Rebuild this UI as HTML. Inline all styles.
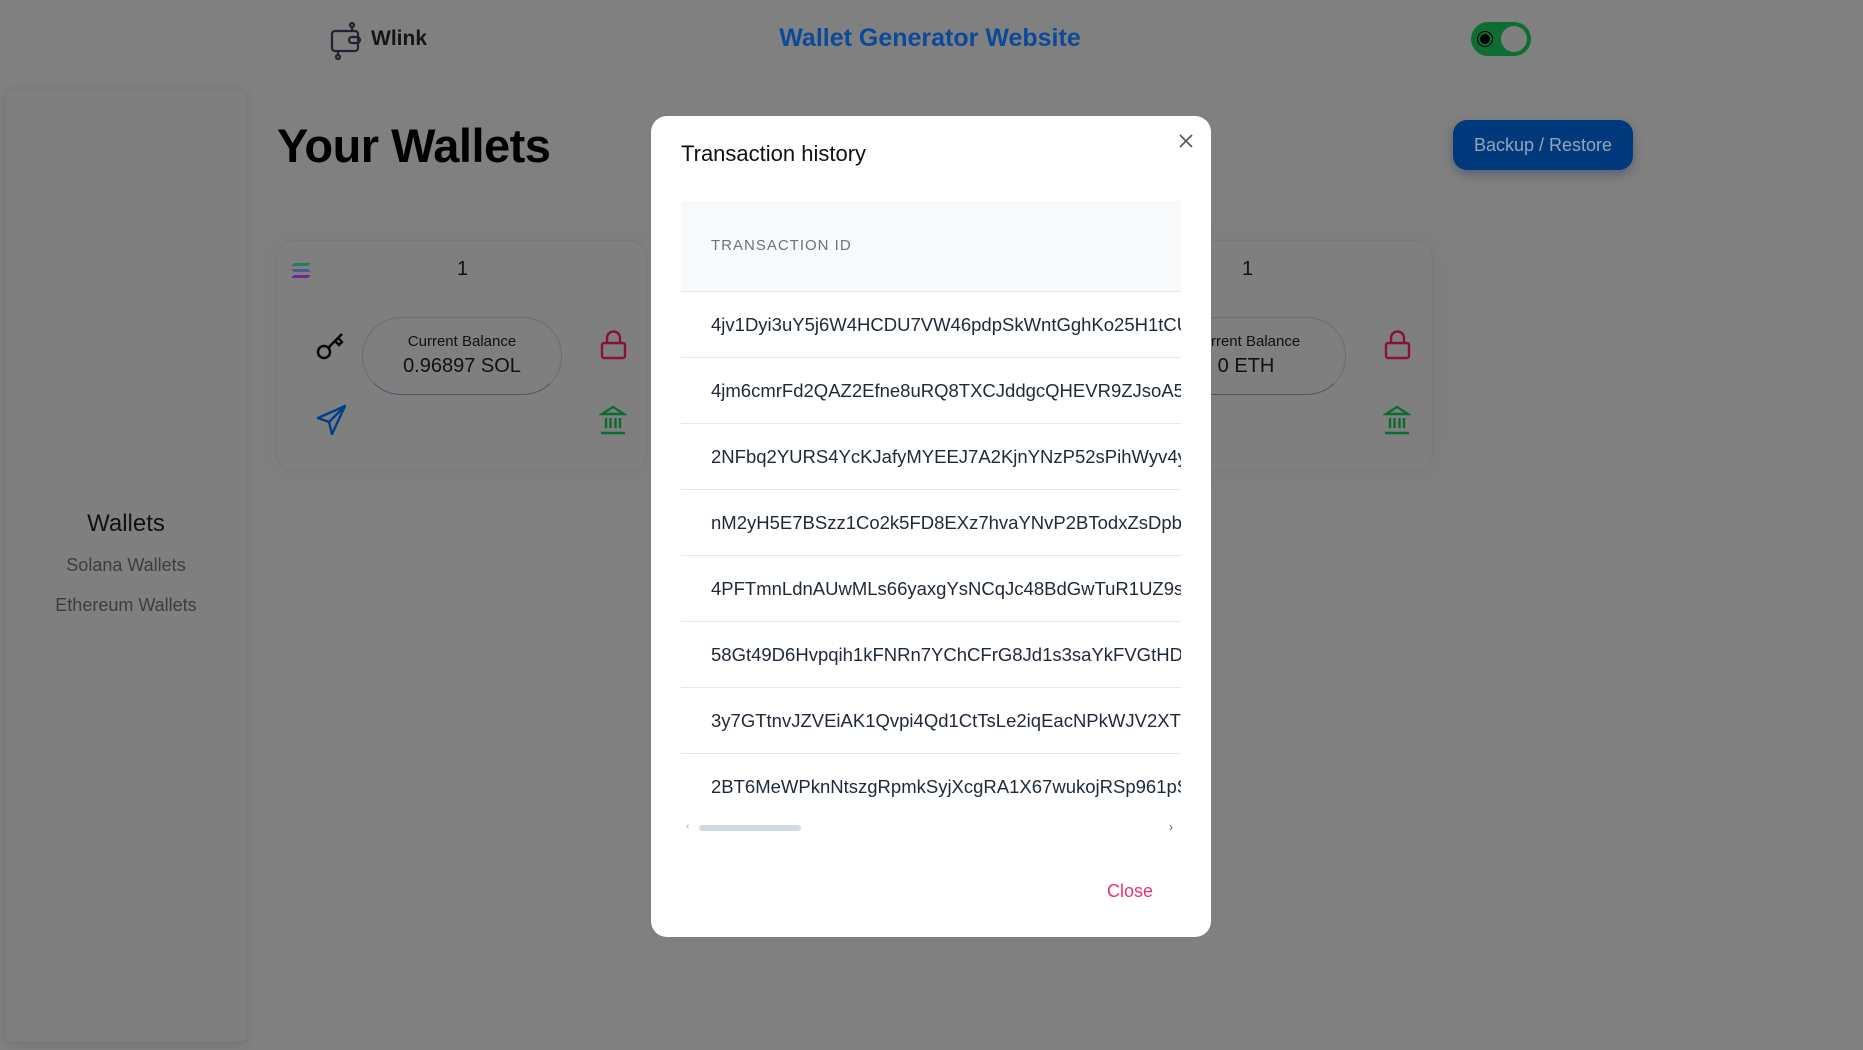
<!DOCTYPE html>
<html><head><meta charset="utf-8"><style>
*{margin:0;padding:0;box-sizing:border-box}
body{width:1863px;height:1050px;background:#808080;font-family:"Liberation Sans",sans-serif;position:relative;overflow:hidden}
.a{position:absolute}
.sidebar{left:6px;top:90px;width:240px;height:952px;background:#7f7f7f;border-radius:6px;box-shadow:0 2px 10px rgba(0,0,0,.12)}
.card{top:240px;width:371px;height:231px;border:1px solid #787878;border-radius:18px;background:#7f7f7f;box-shadow:0 0 20px rgba(0,0,0,.05)}
.pill{width:200px;height:78px;border:1px solid #6e6e6e;border-bottom-color:#4a5570;border-radius:39px;text-align:center}
.pill .l{font-size:15px;color:#111;margin-top:15px}
.pill .v{font-size:20px;color:#111;margin-top:5px}
.modal{left:651px;top:116px;width:560px;height:821px;background:#fff;border-radius:16px}
.row{position:absolute;left:30px;width:500px;height:66px;border-top:1px solid #e5e7eb;font-size:18.5px;color:#1f2937;padding-left:30px;line-height:66px;white-space:nowrap;overflow:hidden}
</style></head><body>
<svg class="a" style="left:330px;top:22px" width="32" height="38" viewBox="0 0 32 38" fill="none" stroke="#1f2430" stroke-width="2.2">
<rect x="2" y="9" width="26" height="20" rx="3"/><rect x="19" y="15" width="11" height="6" rx="3"/>
<path d="M22 9V4"/><circle cx="22" cy="3" r="2"/><path d="M8 29v5"/><circle cx="8" cy="35" r="2"/></svg>
<div class="a" style="left:371px;top:27px;font-size:21px;font-weight:bold;color:#151515">Wlink</div>
<div class="a" style="left:730px;top:24px;width:400px;text-align:center;font-size:25px;font-weight:bold;color:#0b4a98">Wallet Generator Website</div>
<div class="a" style="left:1471px;top:22px;width:60px;height:34px;border-radius:17px;background:#0f6c33"></div>
<div class="a" style="left:1501px;top:26px;width:26px;height:26px;border-radius:50%;background:#7f7f7f"></div>
<div class="a" style="left:1480px;top:34px;width:10px;height:10px;border-radius:50%;background:#000;box-shadow:0 0 0 2px #0f6c33,0 0 0 3px #000"></div>
<div class="a sidebar"></div>
<div class="a" style="left:6px;top:510px;width:240px;text-align:center;font-size:24px;color:#111">Wallets</div>
<div class="a" style="left:6px;top:555px;width:240px;text-align:center;font-size:18px;color:#3d3d3d">Solana Wallets</div>
<div class="a" style="left:6px;top:595px;width:240px;text-align:center;font-size:18px;color:#3d3d3d">Ethereum Wallets</div>
<div class="a" style="left:277px;top:118px;font-size:47px;font-weight:bold;color:#000;letter-spacing:-0.5px">Your Wallets</div>
<div class="a" style="left:1453px;top:120px;width:180px;height:50px;border-radius:14px;background:#003a7c;box-shadow:0 4px 10px rgba(0,40,100,.35);color:#93a4ba;font-size:18px;font-weight:500;text-align:center;line-height:50px">Backup / Restore</div>
<div class="a card" style="left:276px"></div>
<svg class="a" style="left:291px;top:263px" width="20" height="15" viewBox="0 0 20 15"><path d="M3 0h17l-3 3H0z" fill="#2a7a6a"/><path d="M0 6h17l3 3H3z" fill="#4a5a8a"/><path d="M3 12h17l-3 3H0z" fill="#6a2a9a"/></svg>
<div class="a" style="left:457px;top:258px;font-size:20px;color:#111">1</div>
<svg class="a" style="left:315px;top:329px" width="32" height="32" viewBox="0 0 32 32" fill="none" stroke="#000" stroke-width="2.4"><circle cx="9" cy="23" r="6"/><path d="M13 19L27 5M20 12l4 4 3-3-4-4"/></svg>
<div class="a pill" style="left:362px;top:317px"><div class="l">Current Balance</div><div class="v">0.96897 SOL</div></div>
<svg class="a" style="left:600px;top:330px" width="27" height="30" viewBox="0 0 27 30" fill="none" stroke="#8a0f3a" stroke-width="2.4"><rect x="2" y="13" width="23" height="15" rx="2"/><path d="M7 13V8a6.5 6.5 0 0113 0v5"/></svg>
<svg class="a" style="left:315px;top:404px" width="32" height="32" viewBox="0 0 32 32" fill="none" stroke="#003d8a" stroke-width="2.4" stroke-linejoin="round"><path d="M30 2L3 14l11 4 3 12z"/><path d="M14 18L30 2"/></svg>
<svg class="a" style="left:599px;top:405px" width="28" height="30" viewBox="0 0 28 30" fill="none" stroke="#0c6a35" stroke-width="2.4"><path d="M3 9L14 2l11 7z"/><path d="M7 13v10M11.5 13v10M16.5 13v10M21 13v10M2 28h24"/></svg>
<div class="a card" style="left:1062px"></div>
<div class="a" style="left:1242px;top:258px;font-size:20px;color:#111">1</div>
<div class="a pill" style="left:1146px;top:317px"><div class="l">Current Balance</div><div class="v">0 ETH</div></div>
<svg class="a" style="left:1384px;top:330px" width="27" height="30" viewBox="0 0 27 30" fill="none" stroke="#8a0f3a" stroke-width="2.4"><rect x="2" y="13" width="23" height="15" rx="2"/><path d="M7 13V8a6.5 6.5 0 0113 0v5"/></svg>
<svg class="a" style="left:1383px;top:405px" width="28" height="30" viewBox="0 0 28 30" fill="none" stroke="#0c6a35" stroke-width="2.4"><path d="M3 9L14 2l11 7z"/><path d="M7 13v10M11.5 13v10M16.5 13v10M21 13v10M2 28h24"/></svg>
<div class="a modal">
<div class="a" style="left:30px;top:25px;font-size:22px;color:#111;font-weight:500">Transaction history</div>
<svg class="a" style="left:528px;top:18px" width="14" height="14" viewBox="0 0 14 14" stroke="#555" stroke-width="1.6"><path d="M1 1l12 12M13 1L1 13"/></svg>
<div class="a" style="left:30px;top:85px;width:500px;height:90px;background:#f8f9fa"></div>
<div class="a" style="left:60px;top:121px;font-size:15px;letter-spacing:1px;color:#6b7280">TRANSACTION ID</div>
<div class="row" style="top:175px">4jv1Dyi3uY5j6W4HCDU7VW46pdpSkWntGghKo25H1tCUx</div>
<div class="row" style="top:241px">4jm6cmrFd2QAZ2Efne8uRQ8TXCJddgcQHEVR9ZJsoA5x</div>
<div class="row" style="top:307px">2NFbq2YURS4YcKJafyMYEEJ7A2KjnYNzP52sPihWyv4yx</div>
<div class="row" style="top:373px">nM2yH5E7BSzz1Co2k5FD8EXz7hvaYNvP2BTodxZsDpbwx</div>
<div class="row" style="top:439px">4PFTmnLdnAUwMLs66yaxgYsNCqJc48BdGwTuR1UZ9sx</div>
<div class="row" style="top:505px">58Gt49D6Hvpqih1kFNRn7YChCFrG8Jd1s3saYkFVGtHDkx</div>
<div class="row" style="top:571px">3y7GTtnvJZVEiAK1Qvpi4Qd1CtTsLe2iqEacNPkWJV2XTJx</div>
<div class="row" style="top:637px">2BT6MeWPknNtszgRpmkSyjXcgRA1X67wukojRSp961pSx</div>
<div class="a" style="left:35px;top:705px;font-size:10px;color:#aaa">&lsaquo;</div>
<div class="a" style="left:48px;top:709px;width:102px;height:6px;border-radius:3px;background:#d1dae3"></div>
<div class="a" style="left:518px;top:704px;font-size:12px;color:#555">&rsaquo;</div>
<div class="a" style="left:456px;top:765px;font-size:18px;color:#e8336a">Close</div>
</div>
</body></html>
